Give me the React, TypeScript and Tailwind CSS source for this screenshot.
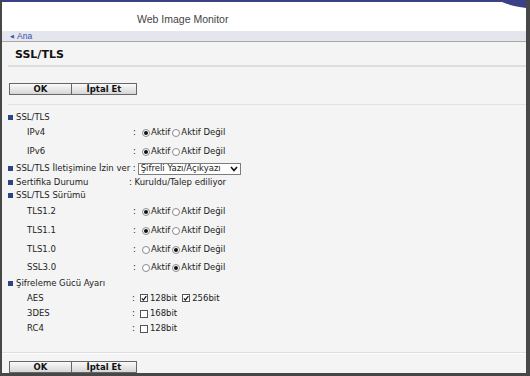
import React from 'react';

const font = { fontFamily: '"DejaVu Sans", Verdana, sans-serif' };

function Radio({ checked, className = '' }: { checked?: boolean; className?: string }) {
  return (
    <span
      className={`inline-flex h-[8px] w-[8px] shrink-0 items-center justify-center rounded-full border border-[#8a8a8a] bg-white ${className}`}
    >
      {checked && <span className="h-[4px] w-[4px] rounded-full bg-[#111]" />}
    </span>
  );
}

function Check({ checked, className = '' }: { checked?: boolean; className?: string }) {
  return (
    <span
      className={`inline-flex h-[8px] w-[8px] shrink-0 items-center justify-center border border-[#555] bg-white ${className}`}
    >
      {checked && (
        <svg width="7" height="7" viewBox="0 0 7 7">
          <path d="M1 3.4 L2.8 5.4 L6.2 0.8" fill="none" stroke="#111" strokeWidth="1.4" />
        </svg>
      )}
    </span>
  );
}

function Buttons() {
  return (
    <div className="ml-[7px] flex h-[12px] text-[8.5px] font-bold leading-[10px] text-[#111]">
      <div className="flex w-[63px] items-center justify-center border border-[#666] bg-gradient-to-b from-[#fafafa] to-[#d6d6d6]">
        OK
      </div>
      <div className="flex w-[65px] items-center justify-center border border-l-0 border-[#666] bg-gradient-to-b from-[#fafafa] to-[#d6d6d6]">
        İptal Et
      </div>
    </div>
  );
}

function Header({ text, h }: { text: string; h: string }) {
  return (
    <div className={`flex items-center pl-[6px] ${h}`}>
      <span className="mr-[3px] h-[5px] w-[5px] bg-[#2e4483]" />
      <span>{text}</span>
    </div>
  );
}

function RadioRow({ label, on, h }: { label: string; on: boolean; h: string }) {
  return (
    <div className={`flex items-center ${h}`}>
      <div className="w-[131px] pl-[25px]">{label}</div>
      <span>:</span>
      <Radio checked={on} className="ml-[6px]" />
      <span className="ml-[1px]">Aktif</span>
      <Radio checked={!on} className="ml-[2px]" />
      <span className="ml-[1px]">Aktif Değil</span>
    </div>
  );
}

function CheckRow({ label, items, h }: { label: string; items: [string, boolean][]; h: string }) {
  return (
    <div className={`flex items-center ${h}`}>
      <div className="w-[130px] pl-[25px]">{label}</div>
      <span>:</span>
      {items.map(([t, c], i) => (
        <React.Fragment key={t + i}>
          <Check checked={c} className="ml-[5px]" />
          <span className="ml-[2px]">{t}</span>
        </React.Fragment>
      ))}
    </div>
  );
}

export default function App() {
  return (
    <div
      className="flex h-[376px] w-[530px] flex-col overflow-hidden border-b-[3px] border-l-2 border-r-4 border-[#474747] bg-[#f4f4f4]"
      style={font}
    >
      <div className="relative h-[31px] shrink-0 border-t-2 border-[#3a4186] bg-white pl-[135px] pt-[11px]">
        <span className="block text-[10.5px] leading-[12px] text-[#444]" style={{ fontFamily: '"Liberation Sans", Arial, sans-serif' }}>
          Web Image Monitor
        </span>
        <svg className="absolute right-0 top-0" width="24" height="7" viewBox="0 0 24 7">
          <path d="M0 0 H24 V6 C15 5 7 3 0 0 Z" fill="#3a4186" />
        </svg>
      </div>
      <div
        className="flex h-[11px] shrink-0 items-center border-b border-[#a8a8a8] bg-[#e4e5ed] pl-[8px] text-[8.5px] leading-[10px] text-[#2f54a8]"
        style={{ fontFamily: '"Liberation Sans", Arial, sans-serif' }}
      >
        <span className="mr-[3px] text-[5px]">◀</span>Ana
      </div>

      <div className="pl-[13px] pt-[6px] text-[11px] font-bold leading-[14px] text-[#111]">SSL/TLS</div>
      <div className="ml-[6px] mt-[3px] h-[2px] bg-[#dedede]" />

      <div className="mt-[16px]">
        <Buttons />
      </div>
      <div className="ml-[6px] mt-[9px] h-px bg-[#e2e2e2]" />

      <div className="mt-[5px] text-[8.5px] leading-none text-[#222]">
        <Header text="SSL/TLS" h="h-[14px]" />
        <RadioRow label="IPv4" on h="h-[17px]" />
        <RadioRow label="IPv6" on h="h-[21px]" />
        <div className="flex h-[13px] items-center pl-[6px]">
          <span className="mr-[3px] h-[5px] w-[5px] bg-[#2e4483]" />
          <span className="whitespace-nowrap">SSL/TLS İletişimine İzin ver :</span>
          <div className="ml-[2px] flex h-[12px] w-[103px] items-center justify-between border border-[#7d7d7d] bg-white pl-[2px] pr-[2px]">
            <span>Şifreli Yazı/Açıkyazı</span>
            <svg width="8" height="6" viewBox="0 0 8 6">
              <path d="M1 1 L4 4.5 L7 1" fill="none" stroke="#111" strokeWidth="1.6" />
            </svg>
          </div>
        </div>
        <div className="flex h-[14px] items-center pl-[6px]">
          <span className="mr-[3px] h-[5px] w-[5px] shrink-0 bg-[#2e4483]" />
          <span className="w-[113px]">Sertifika Durumu</span>
          <span>: Kuruldu/Talep ediliyor</span>
        </div>
        <Header text="SSL/TLS Sürümü" h="h-[13px]" />
        <RadioRow label="TLS1.2" on h="h-[19px]" />
        <RadioRow label="TLS1.1" on h="h-[19px]" />
        <RadioRow label="TLS1.0" on={false} h="h-[19px]" />
        <RadioRow label="SSL3.0" on={false} h="h-[17px]" />
        <Header text="Şifreleme Gücü Ayarı" h="h-[14px]" />
        <CheckRow label="AES" items={[['128bit', true], ['256bit', true]]} h="h-[16px]" />
        <CheckRow label="3DES" items={[['168bit', false]]} h="h-[15px]" />
        <CheckRow label="RC4" items={[['128bit', false]]} h="h-[15px]" />
      </div>

      <div className="mt-[16px] border-b border-t border-b-white border-t-[#dcdce4]" />
      <div className="mt-[7px]">
        <Buttons />
      </div>
    </div>
  );
}
